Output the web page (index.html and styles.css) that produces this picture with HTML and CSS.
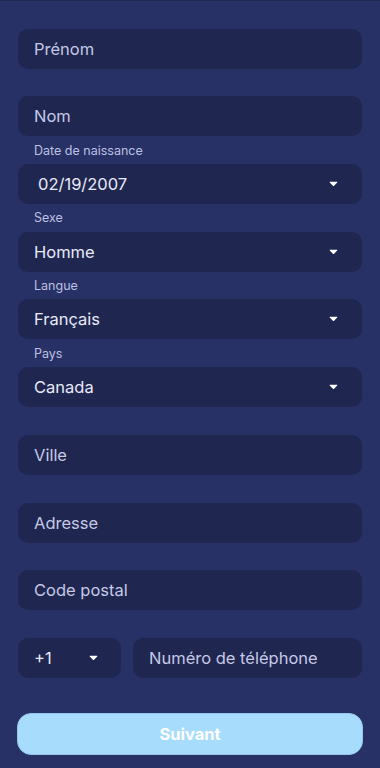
FILE: index.html
```html
<!DOCTYPE html>
<html lang="fr">
<head>
<meta charset="utf-8">
<title>Inscription</title>
<link rel="stylesheet" href="styles.css">
</head>
<body>
<div class="topbar"></div>
<form class="form">
  <div class="group"><div class="label"></div><div class="field"><span class="ph">Prénom</span></div></div>
  <div class="group"><div class="label"></div><div class="field"><span class="ph">Nom</span></div></div>
  <div class="group"><div class="label">Date de naissance</div><div class="field select date"><span class="val">02/19/2007</span><svg class="caret" viewBox="0 0 10 6"><path d="M1.2 0.6 H8.8 Q9.8 0.6 9.1 1.4 L5.7 5 Q5 5.7 4.3 5 L0.9 1.4 Q0.2 0.6 1.2 0.6 Z"/></svg></div></div>
  <div class="group"><div class="label">Sexe</div><div class="field select"><span class="val">Homme</span><svg class="caret" viewBox="0 0 10 6"><path d="M1.2 0.6 H8.8 Q9.8 0.6 9.1 1.4 L5.7 5 Q5 5.7 4.3 5 L0.9 1.4 Q0.2 0.6 1.2 0.6 Z"/></svg></div></div>
  <div class="group"><div class="label">Langue</div><div class="field select"><span class="val">Français</span><svg class="caret" viewBox="0 0 10 6"><path d="M1.2 0.6 H8.8 Q9.8 0.6 9.1 1.4 L5.7 5 Q5 5.7 4.3 5 L0.9 1.4 Q0.2 0.6 1.2 0.6 Z"/></svg></div></div>
  <div class="group"><div class="label">Pays</div><div class="field select"><span class="val">Canada</span><svg class="caret" viewBox="0 0 10 6"><path d="M1.2 0.6 H8.8 Q9.8 0.6 9.1 1.4 L5.7 5 Q5 5.7 4.3 5 L0.9 1.4 Q0.2 0.6 1.2 0.6 Z"/></svg></div></div>
  <div class="group"><div class="label"></div><div class="field"><span class="ph">Ville</span></div></div>
  <div class="group"><div class="label"></div><div class="field"><span class="ph">Adresse</span></div></div>
  <div class="group"><div class="label"></div><div class="field"><span class="ph">Code postal</span></div></div>
  <div class="group"><div class="label"></div>
    <div class="phone-row">
      <div class="field select code"><span class="val">+1</span><svg class="caret" viewBox="0 0 10 6"><path d="M1.2 0.6 H8.8 Q9.8 0.6 9.1 1.4 L5.7 5 Q5 5.7 4.3 5 L0.9 1.4 Q0.2 0.6 1.2 0.6 Z"/></svg></div>
      <div class="field phone"><span class="ph">Numéro de téléphone</span></div>
    </div>
  </div>
  <button type="button" class="next">Suivant</button>
</form>
</body>
</html>
```

FILE: styles.css
```css
html, body {
  margin: 0;
  padding: 0;
}
body {
  background: #283165;
  font-family: "Inter", "Roboto", "Noto Sans", sans-serif;
  width: 380px;
  height: 768px;
  overflow: hidden;
}
.topbar {
  height: 1px;
  background: #1f2753;
}
.form {
  display: flex;
  flex-direction: column;
  padding: 0 18px;
}
.group {
  display: flex;
  flex-direction: column;
}
.label {
  height: 27.7px;
  display: flex;
  align-items: center;
  padding-left: 16px;
  font-size: 12.5px;
  color: #bcc0e2;
}
.field {
  height: 40px;
  background: #1f2650;
  border-radius: 10px;
  display: flex;
  align-items: center;
  padding: 0 16px;
  font-size: 16.5px;
  box-sizing: border-box;
}
.ph {
  color: #c6c9e6;
}
.val {
  color: #e8eaf8;
}
.select {
  justify-content: space-between;
  padding-right: 24px;
}
.date {
  padding-left: 20px;
}
.caret {
  width: 9px;
  height: 6px;
  fill: #ffffff;
}
.phone-row {
  display: flex;
  gap: 12px;
}
.code {
  width: 103px;
  padding-right: 23px;
}
.phone {
  flex: 1;
}
.next {
  margin: 35px -1px 0;
  height: 42px;
  border: 1px solid #95c6ea;
  border-radius: 14px;
  background: #a7dcfd;
  color: #ffffff;
  font-family: "Inter", "Roboto", sans-serif;
  font-size: 16.5px;
  font-weight: 700;
}
```
